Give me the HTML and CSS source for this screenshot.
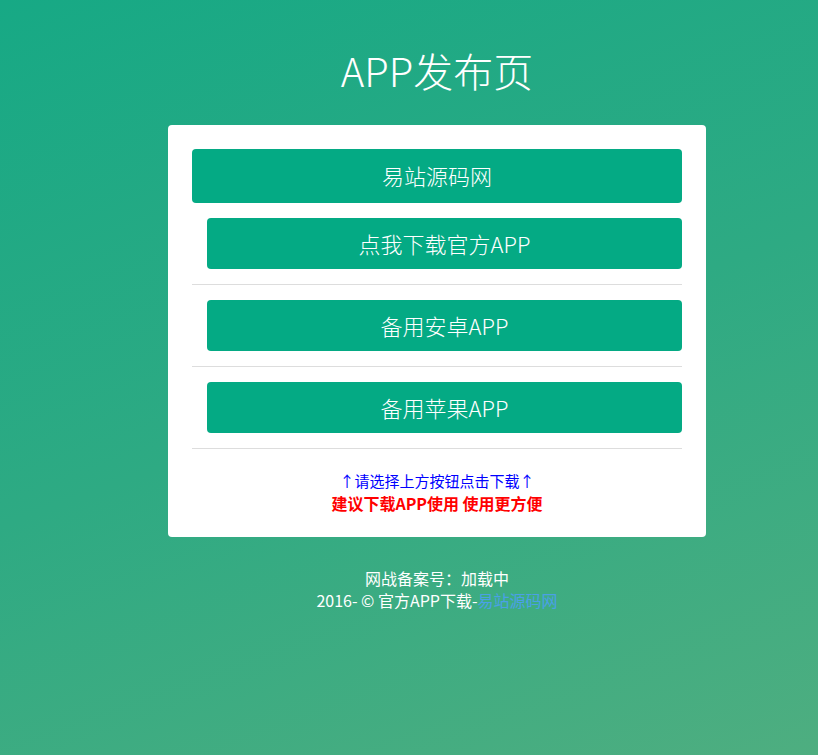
FILE: index.html
```html
<!DOCTYPE html>
<html lang="zh-CN">
<head>
<meta charset="utf-8">
<title>APP发布页</title>
<link rel="stylesheet" href="styles.css">
</head>
<body>
<div class="page">
  <div class="wrap">
    <h1 class="title">APP发布页</h1>
    <div class="card">
      <a class="btn btn-main" href="#">易站源码网</a>
      <a class="btn btn-sub" href="#">点我下载官方APP</a>
      <hr class="sep">
      <a class="btn btn-sub" href="#">备用安卓APP</a>
      <hr class="sep">
      <a class="btn btn-sub" href="#">备用苹果APP</a>
      <hr class="sep">
      <p class="tip">↑请选择上方按钮点击下载↑</p>
      <p class="advice">建议下载APP使用 使用更方便</p>
    </div>
    <div class="footer">
      <p>网战备案号：加载中</p>
      <p>2016- © 官方APP下载-<a href="#" class="link">易站源码网</a></p>
    </div>
  </div>
</div>
</body>
</html>
```
FILE: styles.css
```css
html, body {
  margin: 0;
  padding: 0;
  height: 100%;
}
body {
  font-family: "Noto Sans CJK SC", "Noto Sans", sans-serif;
  background: linear-gradient(160deg, #17a985 0%, #2eaa83 50%, #4eae80 100%);
  color: #fff;
}
.page {
  min-height: 755px;
  padding-left: 56px;
  box-sizing: border-box;
}
.wrap {
  width: 538px;
  margin: 0 auto;
  padding-top: 41px;
}
.title {
  margin: 0;
  text-align: center;
  font-size: 40px;
  font-weight: 300;
  line-height: 58px;
  letter-spacing: 0;
}
.card {
  margin-top: 26px;
  background: #fff;
  border-radius: 4px;
  padding: 24px 24px 23px;
  display: flex;
  flex-direction: column;
}
.btn {
  display: flex;
  align-items: center;
  justify-content: center;
  background: #04aa84;
  color: #fff;
  text-decoration: none;
  border-radius: 4px;
  font-size: 22px;
  font-weight: 300;
  padding-bottom: 2px;
  box-sizing: border-box;
}
.btn-main {
  height: 54px;
  margin-bottom: 15px;
}
.btn-sub {
  height: 51px;
  margin-left: 15px;
}
.sep {
  border: 0;
  border-top: 1px solid #dddddd;
  margin: 15px 0;
  height: 0;
}
.tip {
  margin: 6px 0 0;
  text-align: center;
  color: #0000ff;
  font-size: 15px;
  line-height: 22px;
}
.advice {
  margin: 0;
  text-align: center;
  color: #ff0000;
  font-size: 16px;
  font-weight: 700;
  line-height: 22px;
}
.footer {
  margin-top: 30px;
  text-align: center;
  font-size: 16px;
  line-height: 22px;
}
.footer p {
  margin: 0;
}
.link {
  color: #4aa0e6;
  text-decoration: none;
}
```
